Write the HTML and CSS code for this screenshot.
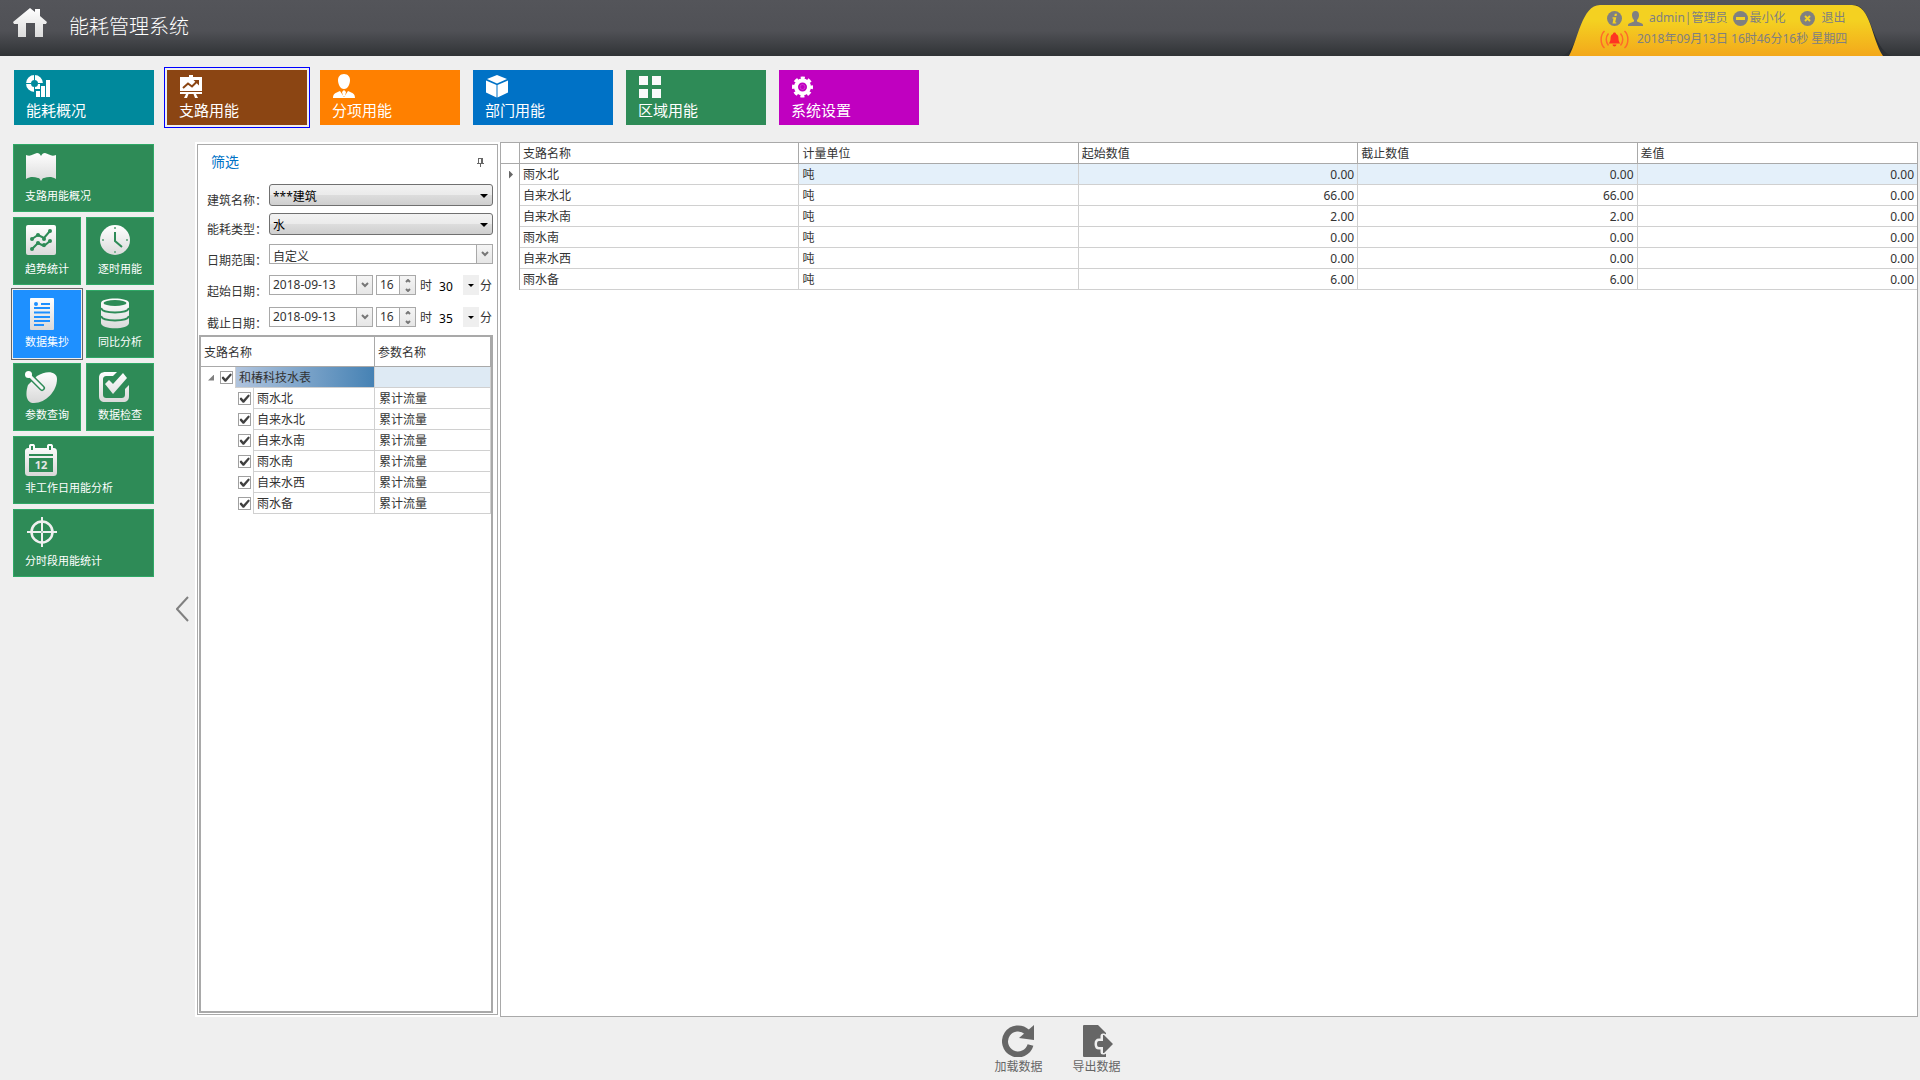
FILE: index.html
```html
<!DOCTYPE html>
<html lang="zh-CN">

<head>
    <meta charset="UTF-8">
    <meta name="viewport" content="width=device-width, initial-scale=1.0">
    <title>能耗管理系统</title>
    <link rel="stylesheet" href="styles.css">
</head>

<body>

    <svg class="defs" aria-hidden="true">
        <defs>
            <linearGradient id="shine" gradientUnits="userSpaceOnUse" x1="0" y1="0" x2="0" y2="32">
                <stop offset="0" stop-color="#fff" />
                <stop offset="1" stop-color="#d8d8d8" />
            </linearGradient>
            <linearGradient id="gold" x1="0" y1="0" x2="0" y2="1">
                <stop offset="0.3" stop-color="#f4d121" />
                <stop offset="1" stop-color="#f3a81b" />
            </linearGradient>
        </defs>
    </svg>

    <header class="header">
        <a href="#" class="home" aria-label="首页">
            <svg width="34" height="30" viewBox="0 0 34 30" fill="url(#shine)">
                <path d="M17 0L22 4V1H27V8L34 14L33 16H30V29H22V15H13V29H5V16H1L0 14Z" />
            </svg>
        </a>
        <h1>能耗管理系统</h1>

        <div class="user-tab">
            <svg class="tab-shape" viewBox="0 0 330 56" preserveAspectRatio="none">
                <path d="M0 56C18 50 18 8 40 5H292C310 5 310 50 330 56Z" fill="#2c2f33" />
                <path d="M7 56C16 40 20 5 38 5H290C309 5 309 38 321 56Z" fill="url(#gold)" />
            </svg>
            <div class="user-row">
                <svg class="info" width="15" height="15" viewBox="0 0 15 15">
                    <circle cx="7.5" cy="7.5" r="7.5" fill="#808080" />
                    <path d="M7.8 2.8H10L9.6 4.9H7.4ZM5.6 6.2H9.3L8.2 11.2H9.2V12.4H5.5L6.5 7.5H5.4Z" fill="#f4d121" />
                </svg>
                <svg class="person" width="15" height="15" viewBox="0 0 15 15" fill="#808080">
                    <path d="M7.5 0C10 0 11.2 2 11 4.500C10.800 6.500 10 8 9 9V10.500L14 12.500C15 13 15 14 15 15H0C0 14 0 13 1 12.500L6 10.500V9C5 8 4.200 6.500 4 4.500C3.800 2 5 0 7.500 0Z" />
                </svg>
                <span class="user-name">admin|管理员</span>
                <button type="button" class="minimize">
                    <svg width="15" height="15" viewBox="0 0 15 15">
                        <circle cx="7.5" cy="7.5" r="7.5" fill="#808080" />
                        <rect x="3" y="6" width="9" height="3" fill="#f4d121" />
                    </svg>
                    最小化
                </button>
                <button type="button" class="exit">
                    <svg width="15" height="15" viewBox="0 0 15 15">
                        <circle cx="7.5" cy="7.5" r="7.5" fill="#808080" />
                        <path d="M5 5L10 10M10 5L5 10" stroke="#f4d121" stroke-width="2" />
                    </svg>
                    退出
                </button>
            </div>
            <div class="clock-row">
                <svg width="29" height="19" viewBox="0 0 29 19" fill="none" stroke="#ff6a2a" stroke-width="1.500">
                    <path d="M4.500 1C0 5 0 14 4.500 18M8.500 3.500C5.500 7 5.500 12 8.500 15.500M24.500 1C29 5 29 14 24.500 18M20.500 3.500C23.500 7 23.500 12 20.500 15.500" />
                    <path d="M14.500 2.500C15.500 2.500 16 3 16 4C18 4.500 18.500 6.500 18.500 9C18.500 11 19.500 12 20 13.500H9C9.500 12 10.500 11 10.500 9C10.500 6.500 11 4.500 13 4C13 3 13.500 2.500 14.500 2.500ZM12.500 14.500H16.500C16 17 13 17 12.500 14.500Z" fill="#ff3322" stroke="none" />
                </svg>
                <time datetime="2018-09-13T16:46:16">2018年09月13日 16时46分16秒 星期四</time>
            </div>
        </div>
    </header>

    <nav class="top-nav">
        <button type="button" class="nav-tile teal">
            <svg width="24" height="24" viewBox="0 0 24 24">
                <circle cx="8.500" cy="9.500" r="6" fill="none" stroke="#fff" stroke-width="5" />
                <path d="M8.500 0V6M0 9.500H5M12 9.500H18M8.500 13V19" stroke="#00899c" />
                <path d="M9 15H14V10H19V5H24V24H9Z" fill="#00899c" />
                <path d="M10 17H14V23H10ZM15 12H19V23H15ZM20 6H24V23H20Z" fill="#fff" />
            </svg>
            能耗概况
        </button>
        <button type="button" class="nav-tile brown active" aria-current="page">
            <svg width="24" height="24" viewBox="0 0 24 24">
                <path d="M10 1H14V3H23V17H1V3H10ZM1 18H23V20H17L19 24H16L14.500 20H9.500L8 24H5L7 20H1Z" fill="#fff" />
                <path d="M4 14L9 9.500L13 12.500L18 7.500" fill="none" stroke="#8b4513" stroke-width="2" />
                <path d="M14.500 6H20V11.500Z" fill="#8b4513" />
            </svg>
            支路用能
        </button>
        <button type="button" class="nav-tile orange">
            <svg width="24" height="24" viewBox="0 0 24 24" fill="#fff">
                <path d="M12 0C16 0 18 3 18 6C18 10 16 15 12 15C8 15 6 10 6 6C6 3 8 0 12 0ZM1 24C1 20 3 19 8 17L12 23L16 17C21 19 23 20 23 24Z" />
                <path d="M12 16L14 18L13 22H11L10 18Z" />
            </svg>
            分项用能
        </button>
        <button type="button" class="nav-tile blue">
            <svg width="24" height="24" viewBox="0 0 24 24" fill="#fff">
                <path d="M12 1L22 5L12 9.500L2 5ZM1 6.500L11.500 11V23.500L1 18.500ZM23 6.500L12.500 11V23.500L23 18.500Z" />
            </svg>
            部门用能
        </button>
        <button type="button" class="nav-tile green">
            <svg width="24" height="24" viewBox="0 0 24 24" fill="#fafafa">
                <path d="M1 2H10V11H1ZM14 2H23V11H14ZM1 15H10V24H1ZM14 15H23V24H14Z" />
            </svg>
            区域用能
        </button>
        <button type="button" class="nav-tile purple">
            <svg width="24" height="24" viewBox="0 0 24 24">
                <circle cx="11.500" cy="13" r="6.500" fill="none" stroke="#fff" stroke-width="4" />
                <circle cx="11.500" cy="13" r="9" fill="none" stroke="#fff" stroke-width="3" stroke-dasharray="4 3.068" stroke-dashoffset="2" />
                <circle cx="11.500" cy="13" r="2.500" fill="none" stroke="#fff" stroke-opacity="0.2" />
            </svg>
            系统设置
        </button>
    </nav>

    <div class="workspace">
        <aside class="sidebar">
            <button type="button" class="side-tile wide">
                <svg width="32" height="32" viewBox="0 0 32 32" fill="url(#shine)">
                    <path d="M1 3C6 5 8 2 12 1C14 1 15 2 16 4C17 2 18 1 20 1C24 2 26 5 31 3V27C26 24 23 25 19 26C17 26 17 28 16 29C15 28 15 26 13 26C9 25 6 24 1 27Z" />
                </svg>
                支路用能概况
            </button>
            <button type="button" class="side-tile">
                <svg width="32" height="32" viewBox="0 0 32 32">
                    <rect x="1" width="30" height="30" rx="2" fill="url(#shine)" />
                    <g fill="none" stroke="#2e8b57" stroke-width="2">
                        <path d="M7 14L13 10L19 13L25 6M7 24L13 18L19 21L25 16" />
                    </g>
                    <g fill="#2e8b57">
                        <circle cx="7" cy="14" r="2" /><circle cx="13" cy="10" r="2" /><circle cx="19" cy="14" r="2" /><circle cx="25" cy="6" r="2" />
                        <circle cx="7" cy="24" r="2" /><circle cx="13" cy="18" r="2" /><circle cx="19" cy="20" r="2" /><circle cx="25" cy="16" r="2" />
                    </g>
                </svg>
                趋势统计
            </button>
            <button type="button" class="side-tile">
                <svg width="32" height="32" viewBox="0 0 32 32">
                    <circle cx="17" cy="15" r="15" fill="url(#shine)" />
                    <path d="M17 7V16L24 22" fill="none" stroke="#2e8b57" stroke-width="2" />
                    <path d="M16 2H18V4H16ZM16 26H18V28H16ZM4 14H6V16H4ZM28 14H30V16H28Z" fill="#7fb595" />
                </svg>
                逐时用能
            </button>
            <button type="button" class="side-tile active" aria-current="page">
                <svg width="32" height="32" viewBox="0 0 32 32">
                    <rect x="5" width="24" height="32" rx="1" fill="url(#shine)" />
                    <path d="M16 6H25M9 10H25M9 14.500H25M9 19H25M9 23H25M9 27H19" stroke="#1e90ff" stroke-width="2" />
                    <circle cx="11" cy="6" r="2" fill="#1e90ff" />
                </svg>
                数据集抄
            </button>
            <button type="button" class="side-tile">
                <svg width="32" height="32" viewBox="0 0 32 32">
                    <path d="M3 5C3-1 31-1 31 5V25C31 32 3 32 3 25Z" fill="url(#shine)" />
                    <ellipse cx="17" cy="5" rx="11.500" ry="3" fill="#2e8b57" />
                    <path d="M3 10C5 16 29 16 31 10M3 18C5 24 29 24 31 18" fill="none" stroke="#2e8b57" stroke-width="2" />
                </svg>
                同比分析
            </button>
            <button type="button" class="side-tile">
                <svg width="32" height="32" viewBox="0 0 32 32">
                    <path d="M12 5C21-1 32 0 32 8C32 20 21 32 9 32C1 32 0 23 3 14Z" fill="url(#shine)" />
                    <path d="M3 3L17 17" stroke="#2e8b57" stroke-width="6" stroke-linecap="round" />
                    <path d="M4 4L17 17" stroke="#f6f6f6" stroke-width="3" stroke-linecap="round" />
                    <circle cx="3.500" cy="3.500" r="3.500" fill="#fff" />
                </svg>
                参数查询
            </button>
            <button type="button" class="side-tile">
                <svg width="32" height="32" viewBox="0 0 32 32" fill="url(#shine)">
                    <path d="M8 1H19L15 5H9C6 5 5 6 5 9V23C5 26 6 27 9 27H23C26 27 27 26 27 23V18L31 14V25C31 29 29 31 25 31H7C3 31 1 29 1 25V7C1 3 3 1 8 1Z" />
                    <path d="M7 13L11 9L15 13L25 2L29 7L15 23Z" />
                </svg>
                数据检查
            </button>
            <button type="button" class="side-tile wide">
                <svg width="32" height="32" viewBox="0 0 32 32">
                    <path d="M4 4V2C4-1 10-1 10 2V4H22V2C22-1 28-1 28 2V4C31 4 32 5 32 8V28C32 31 31 32 28 32H4C1 32 0 31 0 28V8C0 5 1 4 4 4Z" fill="url(#shine)" />
                    <path d="M6 2H8V6H6ZM24 2H26V6H24ZM4 10H28V12H4ZM4 14H28V28H4Z" fill="#2e8b57" />
                    <text x="16" y="25" text-anchor="middle" class="calendar-day">12</text>
                </svg>
                非工作日用能分析
            </button>
            <button type="button" class="side-tile wide">
                <svg width="32" height="32" viewBox="0 0 32 32" fill="none" stroke="#f0f0f0">
                    <circle cx="17" cy="15" r="10.500" stroke-width="2.500" />
                    <path d="M17 0V30M2 15H32" stroke-width="2" />
                    <circle cx="17" cy="15" r="1" fill="#9bc4ac" stroke="none" />
                </svg>
                分时段用能统计
            </button>
        </aside>

        <button type="button" class="collapse" aria-label="收起">
            <svg width="13" height="26" viewBox="0 0 13 26" fill="none" stroke="#808080" stroke-width="2">
                <path d="M12 1L1 13L12 25" />
            </svg>
        </button>

        <div class="content">
            <div class="panels">
                <section class="filter-wrap">
                    <div class="filter">
                        <div class="filter-title">
                            <h2>筛选</h2>
                            <button type="button" aria-label="固定">
                                <svg width="7" height="10" viewBox="0 0 7 10" fill="#666">
                                    <path d="M1 1H6V6H7V7H4V10H3V7H0V6H1ZM2 2V6H4V2Z" fill-rule="evenodd" />
                                </svg>
                            </button>
                        </div>

                        <form class="filter-form">
                            <label for="building">建筑名称：</label>
                            <div class="combo classic">
                                <select id="building"><option>***建筑</option></select>
                                <span class="triangle"></span>
                            </div>

                            <label for="energy">能耗类型：</label>
                            <div class="combo classic">
                                <select id="energy"><option>水</option></select>
                                <span class="triangle"></span>
                            </div>

                            <label for="range">日期范围：</label>
                            <div class="combo flat">
                                <select id="range"><option>自定义</option></select>
                                <span class="arrow-box"><svg width="8" height="6" viewBox="0 0 8 6"><path d="M1 1L4 4L7 1" /></svg></span>
                            </div>

                            <label for="startDate">起始日期：</label>
                            <div class="date-row">
                                <div class="field date">
                                    <input type="text" id="startDate" value="2018-09-13">
                                    <button type="button" class="arrow-box" aria-label="选择起始日期"><svg width="8" height="6" viewBox="0 0 8 6"><path d="M1 1L4 4L7 1" /></svg></button>
                                </div>
                                <div class="field hour">
                                    <input type="text" id="startHour" value="16" aria-label="起始小时">
                                    <div class="spin">
                                        <button type="button" aria-label="增加"><svg width="6" height="4" viewBox="0 0 6 4"><path d="M1 3L3 1L5 3" /></svg></button>
                                        <button type="button" aria-label="减少"><svg width="6" height="4" viewBox="0 0 6 4"><path d="M1 1L3 3L5 1" /></svg></button>
                                    </div>
                                </div>
                                <span class="unit">时</span>
                                <div class="combo minute">
                                    <select aria-label="起始分钟"><option>30</option></select>
                                    <span class="minute-arrow"><i class="triangle"></i></span>
                                </div>
                                <span class="unit">分</span>
                            </div>

                            <label for="endDate">截止日期：</label>
                            <div class="date-row">
                                <div class="field date">
                                    <input type="text" id="endDate" value="2018-09-13">
                                    <button type="button" class="arrow-box" aria-label="选择截止日期"><svg width="8" height="6" viewBox="0 0 8 6"><path d="M1 1L4 4L7 1" /></svg></button>
                                </div>
                                <div class="field hour">
                                    <input type="text" id="endHour" value="16" aria-label="截止小时">
                                    <div class="spin">
                                        <button type="button" aria-label="增加"><svg width="6" height="4" viewBox="0 0 6 4"><path d="M1 3L3 1L5 3" /></svg></button>
                                        <button type="button" aria-label="减少"><svg width="6" height="4" viewBox="0 0 6 4"><path d="M1 1L3 3L5 1" /></svg></button>
                                    </div>
                                </div>
                                <span class="unit">时</span>
                                <div class="combo minute">
                                    <select aria-label="截止分钟"><option>35</option></select>
                                    <span class="minute-arrow"><i class="triangle"></i></span>
                                </div>
                                <span class="unit">分</span>
                            </div>
                        </form>

                        <div class="tree">
                            <table>
                                <thead>
                                    <tr><th class="branch">支路名称</th><th>参数名称</th></tr>
                                </thead>
                                <tbody>
                                    <tr class="root">
                                        <td><div class="node"><span class="expander"></span><input type="checkbox" id="n0" checked><label for="n0">和椿科技水表</label></div></td>
                                        <td class="param"></td>
                                    </tr>
                                    <tr>
                                        <td><div class="node child"><input type="checkbox" id="n1" checked><label for="n1">雨水北</label></div></td>
                                        <td class="param">累计流量</td>
                                    </tr>
                                    <tr>
                                        <td><div class="node child"><input type="checkbox" id="n2" checked><label for="n2">自来水北</label></div></td>
                                        <td class="param">累计流量</td>
                                    </tr>
                                    <tr>
                                        <td><div class="node child"><input type="checkbox" id="n3" checked><label for="n3">自来水南</label></div></td>
                                        <td class="param">累计流量</td>
                                    </tr>
                                    <tr>
                                        <td><div class="node child"><input type="checkbox" id="n4" checked><label for="n4">雨水南</label></div></td>
                                        <td class="param">累计流量</td>
                                    </tr>
                                    <tr>
                                        <td><div class="node child"><input type="checkbox" id="n5" checked><label for="n5">自来水西</label></div></td>
                                        <td class="param">累计流量</td>
                                    </tr>
                                    <tr>
                                        <td><div class="node child"><input type="checkbox" id="n6" checked><label for="n6">雨水备</label></div></td>
                                        <td class="param">累计流量</td>
                                    </tr>
                                </tbody>
                            </table>
                        </div>
                    </div>
                </section>

                <section class="grid-panel">
                    <table class="data-grid">
                        <thead>
                            <tr>
                                <th class="marker"></th>
                                <th>支路名称</th>
                                <th>计量单位</th>
                                <th>起始数值</th>
                                <th>截止数值</th>
                                <th>差值</th>
                            </tr>
                        </thead>
                        <tbody>
                            <tr class="selected"><td class="marker"><span class="pointer"></span></td><td>雨水北</td><td>吨</td><td class="num">0.00</td><td class="num">0.00</td><td class="num">0.00</td></tr>
                            <tr><td class="marker"></td><td>自来水北</td><td>吨</td><td class="num">66.00</td><td class="num">66.00</td><td class="num">0.00</td></tr>
                            <tr><td class="marker"></td><td>自来水南</td><td>吨</td><td class="num">2.00</td><td class="num">2.00</td><td class="num">0.00</td></tr>
                            <tr><td class="marker"></td><td>雨水南</td><td>吨</td><td class="num">0.00</td><td class="num">0.00</td><td class="num">0.00</td></tr>
                            <tr><td class="marker"></td><td>自来水西</td><td>吨</td><td class="num">0.00</td><td class="num">0.00</td><td class="num">0.00</td></tr>
                            <tr><td class="marker"></td><td>雨水备</td><td>吨</td><td class="num">6.00</td><td class="num">6.00</td><td class="num">0.00</td></tr>
                        </tbody>
                    </table>
                </section>
            </div>

            <footer class="actions">
                <button type="button">
                    <svg width="32" height="32" viewBox="0 0 32 32">
                        <path d="M25 7A13 13 0 1 0 28.500 20" fill="none" stroke="#666" stroke-width="6" />
                        <path d="M32 0V15L17 13Z" fill="#666" />
                    </svg>
                    加载数据
                </button>
                <button type="button">
                    <svg width="32" height="32" viewBox="0 0 32 32">
                        <path d="M3 0H17L25 8V32H3C2 32 2 31 2 31V1C2 1 2 0 3 0Z" fill="#666" />
                        <path d="M18 16H22V11H23L31 19L23 27H22V22H18Q16 22 16 19Q16 16 18 16Z" fill="none" stroke="#efefef" stroke-width="5" stroke-linejoin="round" />
                        <path d="M18 16H22V10H23L32 19L23 28H22V22H18Q16 22 16 19Q16 16 18 16Z" fill="#666" />
                    </svg>
                    导出数据
                </button>
            </footer>
        </div>
    </div>

</body>

</html>
```
FILE: styles.css
```css
* {
    box-sizing: border-box;
}

body {
    display: flex;
    flex-direction: column;
    min-height: 100vh;
    margin: 0;
    background-color: #efefef;
    color: #333;
    font-family: "Noto Sans", "Noto Sans CJK SC", sans-serif;
    font-size: 12px;
    line-height: 20px;
}

button,
input,
select {
    margin: 0;
    padding: 0;
    border: none;
    border-radius: 0;
    background: none;
    color: inherit;
    font: inherit;
}

button {
    cursor: pointer;
}

svg {
    display: block;
    flex: none;
}

.defs {
    position: absolute;
    width: 0;
    height: 0;
}

/* header */
.header {
    display: flex;
    align-items: center;
    height: 56px;
    padding: 0 28px 0 13px;
    background: linear-gradient(#54555a, #505156 55%, #303336);
}

.home {
    margin-bottom: 10px;
}

.header h1 {
    margin: 0 0 2px 22px;
    color: #fff;
    font-size: 20px;
    font-weight: 300;
}

.user-tab {
    position: relative;
    display: flex;
    flex-direction: column;
    gap: 3px;
    width: 330px;
    height: 56px;
    margin-left: auto;
    padding: 9px 0 0 38px;
    color: #808080;
    line-height: 18px;
    white-space: nowrap;
}

.tab-shape {
    position: absolute;
    top: 0;
    left: 0;
    width: 100%;
    height: 100%;
}

.user-row,
.clock-row {
    position: relative;
    display: flex;
    align-items: center;
    height: 18px;
}

.user-row {
    padding-left: 7px;
}

.person {
    margin: 0 6px;
}

.user-row button {
    display: flex;
    align-items: center;
}

.minimize {
    gap: 1px;
    margin-left: 6px;
}

.exit {
    gap: 6px;
    margin-left: 15px;
}

.clock-row {
    gap: 8px;
}

/* top navigation */
.top-nav {
    display: flex;
    gap: 13px;
    padding: 14px 14px 17px;
}

.nav-tile {
    display: flex;
    flex-direction: column;
    gap: 2px;
    width: 140px;
    height: 55px;
    padding: 4px 12px;
    color: #fff;
    font-size: 15px;
    text-align: left;
}

.nav-tile.active {
    outline: 1px solid #00f;
    outline-offset: 2px;
}

.teal {
    background-color: #00899c;
}

.brown {
    background-color: #8b4513;
}

.orange {
    background-color: #ff8000;
}

.blue {
    background-color: #0072c6;
}

.green {
    background-color: #2e8b57;
}

.purple {
    background-color: #c000c0;
}

/* side navigation */
.workspace {
    display: flex;
    flex: 1;
}

.sidebar {
    display: grid;
    grid-template-columns: 68px 68px;
    grid-auto-rows: 68px;
    gap: 5px;
    align-content: start;
    padding: 2px 0 0 13px;
}

.side-tile {
    display: flex;
    flex-direction: column;
    gap: 3px;
    padding: 7px 11px;
    border: 1px solid #2fa866;
    background-color: #2e8b57;
    color: #fff;
    font-size: 11px;
    line-height: 18px;
    text-align: left;
    white-space: nowrap;
}

.side-tile.wide {
    grid-column: span 2;
}

.side-tile.active {
    border-color: #1e90ff;
    background-color: #1e90ff;
    outline: 1px solid #666;
    outline-offset: 1px;
}

.calendar-day {
    fill: #e6e6e6;
    font-size: 11px;
    font-weight: bold;
}

.collapse {
    display: flex;
    align-items: center;
    justify-content: center;
    width: 41px;
    padding: 0 0 4px 15px;
}

.content {
    display: flex;
    flex: 1;
    flex-direction: column;
    min-width: 0;
}

.panels {
    display: flex;
    flex: 1;
    padding-right: 2px;
}

/* filter panel */
.filter-wrap {
    display: flex;
    width: 305px;
    padding: 2px;
    background-color: #fff;
}

.filter {
    display: flex;
    flex: 1;
    flex-direction: column;
    border: 1px solid #a9a9a9;
}

.filter-title {
    display: flex;
    align-items: center;
    justify-content: space-between;
    height: 34px;
    padding: 0 13px;
}

.filter-title h2 {
    margin: 0;
    color: #0072c6;
    font-size: 14px;
    font-weight: normal;
}

.filter-form {
    display: grid;
    grid-template-columns: 62px 1fr;
    grid-template-rows: 29px 31px 31px 32px 28px;
    align-items: start;
    padding: 5px 4px 0 9px;
}

.filter-form > label {
    padding-top: 7px;
    white-space: nowrap;
}

.combo {
    position: relative;
}

.combo select {
    display: block;
    width: 100%;
    height: 20px;
    padding: 2px 0 0 3px;
    appearance: none;
}

.combo.classic select {
    height: 22px;
    border: 1px solid #707070;
    border-radius: 3px;
    background: linear-gradient(#f2f2f2, #ebebeb 50%, #dddddd 50%, #cfcfcf);
    color: #000;
}

.combo.flat select {
    border: 1px solid #a9a9a9;
    background-color: #fff;
}

.triangle {
    border-top: 4px solid #000;
    border-right: 4px solid transparent;
    border-left: 4px solid transparent;
    pointer-events: none;
}

.classic .triangle {
    position: absolute;
    top: 10px;
    right: 5px;
}

.arrow-box {
    display: flex;
    align-items: center;
    justify-content: center;
    width: 16px;
    border-left: 1px solid #a9a9a9;
    background: linear-gradient(#f5f5f5, #e6e6e6);
}

.arrow-box path {
    fill: none;
    stroke: #777;
    stroke-width: 2;
}

.flat .arrow-box {
    position: absolute;
    top: 1px;
    right: 1px;
    bottom: 1px;
    pointer-events: none;
}

.date-row {
    display: flex;
    align-items: center;
    height: 20px;
}

.field {
    display: flex;
    height: 20px;
    border: 1px solid #a9a9a9;
    background-color: #fff;
}

.field input {
    flex: 1;
    min-width: 0;
    padding-left: 3px;
    line-height: 18px;
}

.field.date {
    width: 104px;
    margin-right: 3px;
}

.field.hour {
    width: 40px;
}

.spin {
    display: flex;
    flex-direction: column;
    width: 16px;
    border-left: 1px solid #a9a9a9;
    background: linear-gradient(#f5f5f5, #e6e6e6);
}

.spin button {
    display: flex;
    flex: 1;
    align-items: center;
    justify-content: center;
}

.spin path {
    fill: none;
    stroke: #777;
    stroke-width: 2;
}

.unit {
    padding-top: 2px;
}

.hour + .unit {
    margin-left: 4px;
}

.combo.minute {
    width: 47px;
    margin-right: 1px;
}

.minute select {
    padding-left: 7px;
    color: #000;
}

.minute-arrow {
    position: absolute;
    top: 0;
    right: 0;
    display: flex;
    align-items: center;
    justify-content: center;
    width: 16px;
    height: 20px;
    background-color: #efefef;
    pointer-events: none;
}

.minute .triangle {
    border-width: 3px 3px 0;
}

/* branch tree */
.tree {
    flex: 1;
    margin: 0 4px 1px 1px;
    border: 2px solid #a9a9a9;
}

table {
    width: 100%;
    border-spacing: 0;
    line-height: 18px;
    table-layout: fixed;
}

th,
td {
    overflow: hidden;
    padding: 2px 3px 0;
    font-weight: normal;
    text-align: left;
    white-space: nowrap;
}

.tree th {
    height: 30px;
    border-right: 1px solid #a9a9a9;
    border-bottom: 1px solid #a9a9a9;
}

.tree .branch {
    width: 174px;
}

.tree td {
    height: 21px;
    padding: 0;
    border-right: 1px solid #d0d0d0;
}

.tree .param {
    padding: 2px 0 0 4px;
    border-bottom: 1px solid #d0d0d0;
}

.node {
    display: flex;
    align-items: center;
    height: 21px;
    padding-left: 7px;
}

.node.child {
    padding-left: 37px;
}

.node label {
    flex: 1;
    height: 21px;
    margin-left: 2px;
    padding: 2px 0 0 3px;
    border-bottom: 1px solid #d0d0d0;
    border-left: 1px solid #d0d0d0;
}

.expander {
    width: 6px;
    height: 6px;
    margin-right: 6px;
    background-color: #808080;
    clip-path: polygon(100% 0, 100% 100%, 0 100%);
}

.node input {
    width: 13px;
    height: 13px;
    border: 1px solid #a0a0a0;
    background-color: #fff;
    appearance: none;
}

.node input:checked::before {
    content: "";
    display: block;
    width: 11px;
    height: 11px;
    background-color: #404040;
    clip-path: polygon(8% 45%, 22% 40%, 40% 62%, 84% 14%, 96% 18%, 96% 30%, 46% 88%, 34% 88%, 8% 60%);
}

.root label {
    background: linear-gradient(to right, #b0c4de, #4682b4);
}

.root .param {
    background-color: #deeaf4;
}

/* readings grid */
.grid-panel {
    flex: 1;
    min-width: 0;
    border: 1px solid #a9a9a9;
    background-color: #fff;
}

.data-grid th {
    height: 21px;
    border-right: 1px solid #a9a9a9;
    border-bottom: 1px solid #a9a9a9;
}

.data-grid td {
    height: 21px;
    border-right: 1px solid #d0d0d0;
    border-bottom: 1px solid #d0d0d0;
}

.data-grid th:last-child,
.data-grid td:last-child {
    border-right: none;
}

.data-grid .num {
    text-align: right;
}

.data-grid .marker {
    width: 19px;
    padding: 0;
    border-right-color: #a9a9a9;
}

.data-grid td.marker {
    border-bottom: none;
}

.pointer {
    display: block;
    width: 4px;
    height: 8px;
    margin-left: 8px;
    background-color: #666;
    clip-path: polygon(0 0, 100% 50%, 0 100%);
}

.selected .num,
.selected td:nth-child(3) {
    background-color: #e4f0fa;
}

/* bottom actions */
.actions {
    display: flex;
    justify-content: center;
    gap: 30px;
    height: 63px;
    padding-top: 8px;
}

.actions button {
    display: flex;
    flex-direction: column;
    align-items: center;
    color: #666;
}
```
